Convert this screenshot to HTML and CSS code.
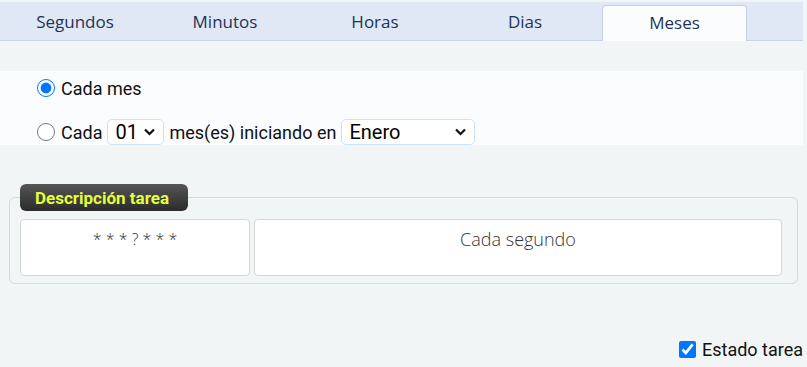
FILE: index.html
```html
<!DOCTYPE html>
<html lang="es">
<head>
<meta charset="utf-8">
<title>Cron Meses</title>
<link rel="stylesheet" href="styles.css">
</head>
<body>
<div class="page">
  <nav class="tabs">
    <div class="tab">Segundos</div>
    <div class="tab">Minutos</div>
    <div class="tab">Horas</div>
    <div class="tab">Dias</div>
    <div class="tab active">Meses</div>
  </nav>

  <section class="options">
    <label class="row">
      <input type="radio" name="mes" class="radio" checked>
      <span>Cada mes</span>
    </label>
    <label class="row">
      <input type="radio" name="mes" class="radio">
      <span>Cada</span>
      <span class="select small">
        <span class="select-value">01</span>
        <svg class="chev" viewBox="0 0 12 8" width="13" height="8"><path d="M1.5 1.5 L6 6 L10.5 1.5" fill="none" stroke="#111" stroke-width="2.2"/></svg>
      </span>
      <span>mes(es) iniciando en</span>
      <span class="select wide">
        <span class="select-value">Enero</span>
        <svg class="chev" viewBox="0 0 12 8" width="13" height="8"><path d="M1.5 1.5 L6 6 L10.5 1.5" fill="none" stroke="#111" stroke-width="2.2"/></svg>
      </span>
    </label>
  </section>

  <fieldset class="desc">
    <legend class="desc-label">Descripción tarea</legend>
    <div class="desc-boxes">
      <div class="box expr">* * * ? * * *</div>
      <div class="box text">Cada segundo</div>
    </div>
  </fieldset>

  <div class="status">
    <label class="status-label">
      <input type="checkbox" class="check" checked>
      <span>Estado tarea</span>
    </label>
  </div>
</div>
</body>
</html>
```

FILE: styles.css
```css
html, body {
  margin: 0;
  padding: 0;
  background: #f2f5f6;
}

.page {
  width: 803px;
  padding-top: 2px;
  font-family: Roboto, "Liberation Sans", sans-serif;
  color: #111;
}

.tabs {
  display: flex;
  height: 38px;
  background: #dfe8f4;
  border-bottom: 1px solid #c9d5e4;
}

.tab {
  box-sizing: border-box;
  width: 150px;
  text-align: center;
  font-family: "Open Sans", sans-serif;
  font-weight: 400;
  font-size: 17px;
  line-height: 40px;
  color: #1e3358;
}

.tab.active {
  width: 145px;
  margin: 3px 3px -1px 2px;
  line-height: 34px;
  background: #fafcfe;
  border: 1px solid #c5d1e1;
  border-bottom: none;
  border-radius: 4px 4px 0 0;
}

.options {
  margin-top: 30px;
  background: #fafcfe;
  padding: 4px 0 0 37px;
  height: 70px;
  display: flex;
  flex-direction: column;
}

.row {
  display: flex;
  align-items: center;
  gap: 5px;
  font-size: 18px;
  height: 26px;
}

.row + .row {
  margin-top: 18px;
}

.radio {
  width: 18px;
  height: 18px;
  margin: 0 1px 0 0;
  accent-color: #0075ff;
}

.select {
  box-sizing: border-box;
  height: 26px;
  display: flex;
  align-items: center;
  justify-content: space-between;
  border: 1px solid #cde3f1;
  border-radius: 5px;
  background: #fff;
  padding: 0 7px 0 7px;
  font-size: 20px;
  color: #000;
}

.select.small {
  width: 57px;
}

.select.wide {
  width: 134px;
}

.chev {
  display: block;
}

.desc {
  box-sizing: border-box;
  margin: 39px 0 0 9px;
  width: 789px;
  border: 1px solid #d6d9dc;
  border-radius: 6px;
  padding: 0 15px 7px 10px;
}

.desc-label {
  padding: 0 19px 0 15px;
  height: 27px;
  line-height: 28px;
  margin-left: 0;
  border-radius: 6px;
  background: linear-gradient(#555, #2b2b2b);
  color: #e4ff3a;
  font-weight: 700;
  font-size: 17px;
}

.desc-boxes {
  display: flex;
  gap: 4px;
  margin-top: 8px;
}

.box {
  box-sizing: border-box;
  height: 57px;
  background: #fff;
  border: 1px solid #d6d6d6;
  border-radius: 4px;
  text-align: center;
  font-family: "Open Sans", sans-serif;
  font-weight: 300;
  font-size: 16px;
  color: #333;
  padding-top: 8px;
}

.box.expr {
  width: 230px;
}

.box.text {
  width: 528px;
  font-size: 18px;
  padding-top: 7px;
}

.status {
  display: flex;
  justify-content: flex-end;
  margin-top: 55px;
}

.status-label {
  display: flex;
  align-items: center;
  gap: 6px;
  font-size: 18px;
}

.check {
  width: 17px;
  height: 17px;
  margin: 0;
  accent-color: #0075ff;
}
```
